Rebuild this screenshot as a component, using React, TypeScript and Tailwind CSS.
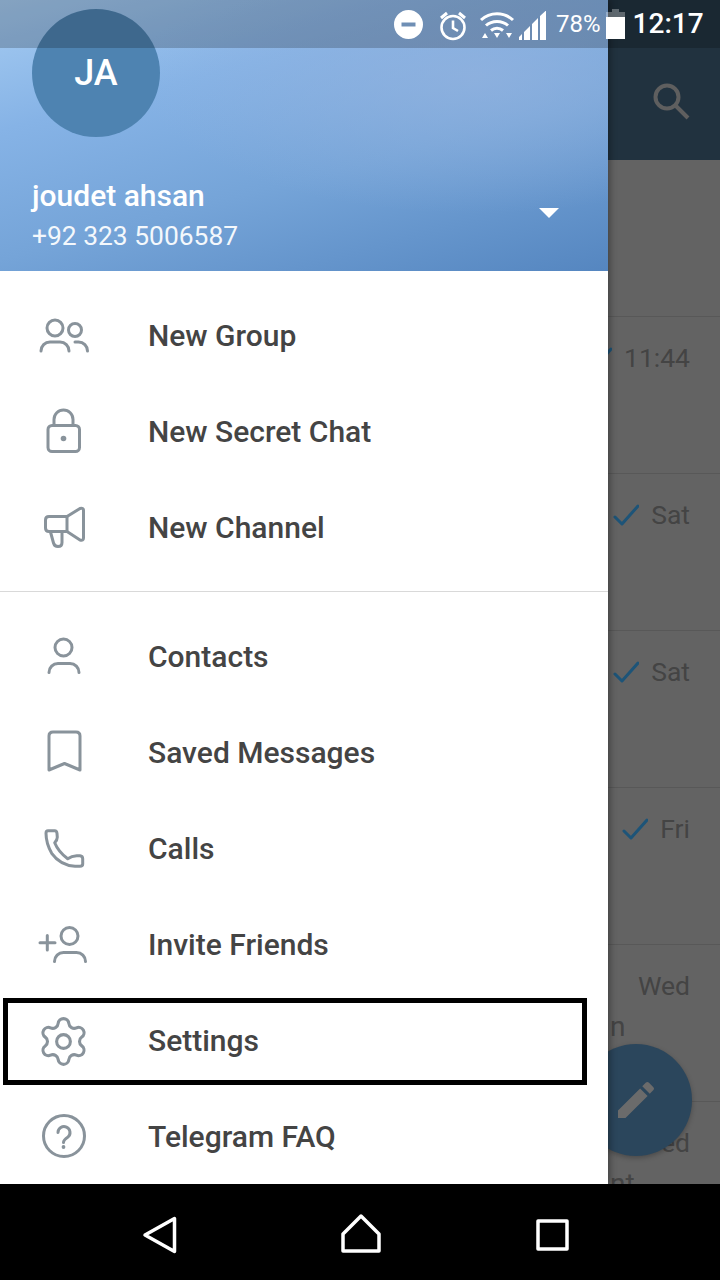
import { Settings } from "lucide-react";
import type { ReactNode } from "react";

const ICON_STROKE = {
  fill: "none",
  stroke: "#89939b",
  strokeWidth: 3,
  strokeLinecap: "round" as const,
  strokeLinejoin: "round" as const,
};

function MenuSvg({ children }: { children: ReactNode }) {
  return (
    <svg width="60" height="60" viewBox="0 0 60 60" {...ICON_STROKE}>
      {children}
    </svg>
  );
}

const GroupIcon = () => (
  <MenuSvg>
    <circle cx="21" cy="22" r="8" />
    <path d="M7 45c0-5 4-9 9-9h10c5 0 9 4 9 9" />
    <circle cx="41" cy="24" r="6.5" />
    <path d="M41 36h3.500c5 0 9 4 9 9" />
  </MenuSvg>
);

const LockIcon = () => (
  <MenuSvg>
    <rect x="14" y="23.500" width="31.500" height="26" rx="4" />
    <path d="M20 23v-5.500a9.500 9.500 0 0 1 19 0V23" />
    <circle cx="29.500" cy="36.500" r="2.800" fill="#89939b" stroke="none" />
  </MenuSvg>
);

const ChannelIcon = () => (
  <MenuSvg>
    <path d="M33 18.500H15q-3.500 0-3.500 3.500v8q0 3.500 3.500 3.500h18z" />
    <path d="M33 18.500 46 10.500q3.500-1 3.500 2V40q0 3-3.500 2L33 33.500" />
    <path d="M16.500 34l3 11q1 3.500 4.500 3.500 4 0 4-4V34" />
  </MenuSvg>
);

const ContactIcon = () => (
  <MenuSvg>
    <circle cx="29.500" cy="20.500" r="8.500" />
    <path d="M15 45.500c0-5 4-9 9-9h12c5 0 9 4 9 9" />
  </MenuSvg>
);

const BookmarkIcon = () => (
  <MenuSvg>
    <path d="M15 47V13q0-4 4-4h23q4 0 4 4v34l-15.500-6.500z" />
  </MenuSvg>
);

const PhoneIcon = () => (
  <MenuSvg>
    <path d="M14 11.700H20.700Q22.700 11.700 23 14.300L23.300 18.300Q23.300 21 20.700 23.700Q24.300 32.700 33.700 39.700Q37.700 37 42.700 36.700L46 36.700Q48.700 37 48.700 39.700V45Q48.700 47.300 46 47.300H41Q26 46 17.700 34.300Q12 24.300 12 14.300Q12 11.700 14 11.700Z" />
  </MenuSvg>
);

const InviteIcon = () => (
  <MenuSvg>
    <circle cx="35.500" cy="21" r="8.500" />
    <path d="M20.500 46.500c0-5 4-9 9-9h13c5 0 9 4 9 9" />
    <path d="M6 27.700h15M13.300 20.500v14.500" />
  </MenuSvg>
);

const GearIcon = () => (
  <div className="flex h-[60px] w-[59px] items-center justify-center">
    <Settings size={55} strokeWidth={1.35} color="#89939b" />
  </div>
);

const FaqIcon = () => (
  <MenuSvg>
    <circle cx="30" cy="29" r="20.500" />
    <path d="M24 25.500a6 6 0 1 1 10 4.500c-3 2-4.500 3-4.500 5.500" />
    <circle cx="29.500" cy="40" r="1.900" fill="#89939b" stroke="none" />
  </MenuSvg>
);

function MenuRow({ icon, label, boxed }: { icon: ReactNode; label: string; boxed?: boolean }) {
  return (
    <div className="relative flex h-[96px] shrink-0 items-center">
      <div className="ml-[34px] w-[114px] shrink-0">{icon}</div>
      <span className="pb-[2px] text-[30px] font-medium text-[#444444]">{label}</span>
      {boxed && (
        <div className="absolute left-[3px] top-[5px] h-[87px] w-[584px] border-[5px] border-black" />
      )}
    </div>
  );
}

function Check() {
  return (
    <svg width="26" height="22" viewBox="0 0 26 22" fill="none" stroke="#1d5478" strokeWidth="3" strokeLinecap="round" strokeLinejoin="round" className="shrink-0">
      <path d="M2 13l7 7L25 2" />
    </svg>
  );
}

function ChatRow({ time, checked, tail }: { time?: string; checked?: boolean; tail?: string }) {
  return (
    <div className="h-[157px] shrink-0 border-b border-[#585858] pt-[25px] text-[26.500px] leading-[32px] text-[#444444]">
      <div className="flex h-[32px] items-center justify-end gap-[12px] pr-[30px]">
        {checked && <Check />}
        {time && <span className="shrink-0">{time}</span>}
      </div>
      {tail && <div className="mt-[9px] pl-[2px] text-[28px]">{tail}</div>}
    </div>
  );
}

function StatusBar() {
  return (
    <div className="absolute inset-x-0 top-0 z-20 flex h-[48px] items-center bg-black/20 pl-[394px] text-white">
      <svg width="29" height="29" viewBox="0 0 29 29" className="shrink-0">
        <path fillRule="evenodd" fill="#fff" d="M14.500 0a14.500 14.500 0 1 0 0 29 14.500 14.500 0 0 0 0-29zM7.500 12.500h14v4h-14z" />
      </svg>
      <svg width="30" height="30" viewBox="0 0 30 30" fill="none" stroke="#fff" strokeWidth="2.600" className="ml-[15px] mt-[3px] shrink-0">
        <circle cx="15" cy="16.500" r="11.500" />
        <path d="M15 9.500v7.500l5 3" />
        <path d="M3 7l6-5M27 7l-6-5" strokeWidth="3" />
      </svg>
      <svg width="36" height="29" viewBox="0 0 36 29" fill="#fff" className="ml-[11px] mt-[1px] shrink-0">
        <g fill="none" stroke="#fff" strokeWidth="3">
          <path d="M2 10C11 1.500 25 1.500 34 10" />
          <path d="M7 15.500C13 10 23 10 29 15.500" />
          <path d="M12 20.500c3.500-3 8.500-3 12 0" />
        </g>
        <path d="M15 23h6l-3 5zM3 28l3-5 3 5zM27 23h6l-3 5z" />
      </svg>
      <svg width="28" height="29" viewBox="0 0 28 29" fill="#fff" className="ml-[3px] mt-[2px] shrink-0">
        <path d="M1 29v-3l3-3v6zM6 29v-8l6-6v14zM14 29V13l6-6v22zM22 29V5l6-5.500V29z" />
      </svg>
      <span className="ml-[10px] shrink-0 text-[24px] leading-none">78%</span>
      <svg width="19" height="30" viewBox="0 0 19 30" className="ml-[5px] shrink-0">
        <path d="M6 0h7v3h6v5H0V3h6z" fill="#fff" fillOpacity="0.3" />
        <path d="M0 8h19v22H0z" fill="#fff" />
      </svg>
      <span className="ml-[8px] shrink-0 text-[28px] font-medium leading-none">12:17</span>
    </div>
  );
}

export default function App() {
  return (
    <div className="relative flex h-[1280px] w-[720px] flex-col overflow-hidden bg-black font-[Roboto,sans-serif]">
      <StatusBar />

      <div className="flex h-[1184px] shrink-0">
        {/* Drawer */}
        <aside className="relative z-10 flex w-[608px] shrink-0 flex-col overflow-hidden bg-white shadow-[2px_0_7px_rgba(0,0,0,0.35)]">
          <header className="flex h-[271px] shrink-0 flex-col bg-[radial-gradient(ellipse_at_78%_28%,rgba(146,178,222,0.75)_0%,transparent_50%),linear-gradient(165deg,#a6ccf2_0%,#86b3e6_30%,#75a4d8_60%,#5586c0_100%)] pl-[32px] pt-[9px] text-white">
            <div className="flex h-[128px] w-[128px] items-center justify-center rounded-full bg-[#4e83b1] text-[36px] font-medium">
              JA
            </div>
            <div className="mt-[39px] flex items-end justify-between pr-[49px]">
              <div>
                <p className="text-[30px] font-medium leading-[40px]">joudet ahsan</p>
                <p className="text-[26.400px] leading-[40px] text-[#f4f8fc]">+92 323 5006587</p>
              </div>
              <svg width="20" height="10" viewBox="0 0 20 10" className="mb-[38px]">
                <path d="M0 0h20L10 10z" fill="#fff" />
              </svg>
            </div>
          </header>

          <nav className="flex flex-col pt-[17px]">
            <MenuRow icon={<GroupIcon />} label="New Group" />
            <MenuRow icon={<LockIcon />} label="New Secret Chat" />
            <MenuRow icon={<ChannelIcon />} label="New Channel" />
            <div className="mb-[17px] mt-[15px] h-px shrink-0 bg-[#d9d9d9]" />
            <MenuRow icon={<ContactIcon />} label="Contacts" />
            <MenuRow icon={<BookmarkIcon />} label="Saved Messages" />
            <MenuRow icon={<PhoneIcon />} label="Calls" />
            <MenuRow icon={<InviteIcon />} label="Invite Friends" />
            <MenuRow icon={<GearIcon />} label="Settings" boxed />
            <MenuRow icon={<FaqIcon />} label="Telegram FAQ" />
          </nav>
        </aside>

        {/* Dimmed chat list behind the drawer */}
        <main className="relative flex w-[112px] shrink-0 flex-col overflow-hidden bg-[#636363]">
          <div className="flex h-[160px] shrink-0 items-start justify-end bg-[#21323f] pr-[28px] pt-[80px]">
            <svg width="42" height="42" viewBox="0 0 42 42" fill="none" stroke="#5f5f5f" strokeWidth="4">
              <circle cx="17" cy="17" r="11.500" />
              <path d="M25.500 25.500 38 38" />
            </svg>
          </div>
          <ChatRow />
          <ChatRow time="11:44" checked />
          <ChatRow time="Sat" checked />
          <ChatRow time="Sat" checked />
          <ChatRow time="Fri" checked />
          <ChatRow time="Wed" tail="n" />
          <ChatRow time="Wed" tail="nt" />
          <div className="absolute bottom-[28px] right-[28px] flex h-[112px] w-[112px] items-center justify-center rounded-full bg-[#2b465c] shadow-[0_2px_5px_rgba(0,0,0,0.25)]">
            <svg width="48" height="48" viewBox="0 0 24 24" fill="#6b6b6b">
              <path d="M3 17.250V21h3.750L17.810 9.940l-3.750-3.750L3 17.250zM20.710 7.040a1 1 0 0 0 0-1.410l-2.340-2.340a1 1 0 0 0-1.410 0l-1.830 1.830 3.750 3.750 1.830-1.830z" />
            </svg>
          </div>
        </main>
      </div>

      {/* Android navigation bar */}
      <footer className="flex h-[96px] shrink-0 items-center bg-black pl-[140px]">
        <svg width="40" height="40" viewBox="0 0 40 40" fill="none" stroke="#fff" strokeWidth="3.500" strokeLinejoin="round" className="mt-[6px]">
          <path d="M5 20 34.500 3.500v33z" />
        </svg>
        <svg width="42" height="42" viewBox="0 0 42 42" fill="none" stroke="#fff" strokeWidth="3.500" strokeLinejoin="round" className="ml-[160px]">
          <path d="M3 23 21 5l18 18v17H3z" />
        </svg>
        <svg width="33" height="32" viewBox="0 0 33 32" fill="none" stroke="#fff" strokeWidth="3.500" strokeLinejoin="round" className="ml-[154px] mt-[6px]">
          <rect x="2" y="2" width="29" height="28" />
        </svg>
      </footer>
    </div>
  );
}
